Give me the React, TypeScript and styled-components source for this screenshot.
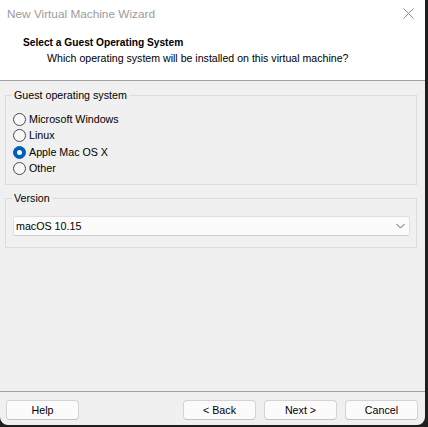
import React, { useState } from "react";
import styled, { createGlobalStyle } from "styled-components";

const Global = createGlobalStyle`
  html, body { margin: 0; padding: 0; background: #1e1e1e; }
  body { font-family: "Liberation Sans", Arial, sans-serif; }
  * { box-sizing: border-box; }
`;

const Window = styled.div`
  width: 425px;
  height: 425px;
  background: #f0f0f0;
  border-radius: 0 0 8px 8px;
  overflow: hidden;
  display: flex;
  flex-direction: column;
  font-family: "Liberation Sans", Arial, sans-serif;
  font-size: 10.7px;
  color: #000;
`;

const Header = styled.div`
  background: #ffffff;
  height: 81px;
  border-bottom: 1px solid #a0a0a0;
  display: flex;
  flex-direction: column;
`;

const TitleBar = styled.div`
  height: 27px;
  display: flex;
  align-items: center;
  justify-content: space-between;
  padding: 0 11px 0 7px;
`;

const TitleText = styled.span`
  font-size: 11.8px;
  color: #9b9b9b;
  font-family: "Liberation Sans", Arial, sans-serif;
`;

const CloseIcon = styled.svg`
  width: 11px;
  height: 11px;
  display: block;
`;

const HeadingBlock = styled.div`
  padding: 9px 0 0 23px;
  display: flex;
  flex-direction: column;
  gap: 3px;
`;

const Heading = styled.div`
  font-weight: bold;
  font-size: 10.2px;
  line-height: 13px;
`;

const Subheading = styled.div`
  font-size: 10.6px;
  line-height: 13px;
  padding-left: 24px;
`;

const Group = styled.fieldset<{ $top: number }>`
  margin: ${(p) => p.$top}px 8px 0 5px;
  padding: 0;
  border: 1px solid #dcdcdc;
  min-width: 0;
`;

const Legend = styled.legend`
  margin-left: 6px;
  padding: 0 2px;
  font-size: 10.7px;
  line-height: 13px;
`;

const RadioList = styled.div`
  display: flex;
  flex-direction: column;
  padding: 9px 0 7px 7px;
`;

const RadioRow = styled.label`
  display: flex;
  align-items: center;
  gap: 3px;
  height: 16.5px;
  line-height: 13px;
  cursor: default;
`;

const RadioCircle = styled.span<{ $checked: boolean }>`
  width: 13px;
  height: 13px;
  border-radius: 50%;
  flex: none;
  display: flex;
  align-items: center;
  justify-content: center;
  background: ${(p) => (p.$checked ? "#005fb8" : "#f7f7f7")};
  border: 1px solid ${(p) => (p.$checked ? "#005fb8" : "#4a4a4a")};
  &::after {
    content: "";
    display: ${(p) => (p.$checked ? "block" : "none")};
    width: 5px;
    height: 5px;
    border-radius: 50%;
    background: #ffffff;
  }
`;

const SelectWrap = styled.div`
  padding: 11px 6px 11px 7px;
`;

const SelectBox = styled.div`
  height: 20px;
  background: #fbfbfb;
  border: 1px solid #e0e0e0;
  border-bottom-color: #cfcfcf;
  border-radius: 2px;
  display: flex;
  align-items: center;
  justify-content: space-between;
  padding: 0 4px 0 2px;
  font-size: 10.7px;
`;

const Chevron = styled.svg`
  width: 9px;
  height: 6px;
  display: block;
`;

const Spacer = styled.div`
  flex: 1;
`;

const Footer = styled.div`
  border-top: 1px solid #a0a0a0;
  padding: 8px 7px 5px 6px;
  display: flex;
  align-items: center;
  gap: 8px;
`;

const Button = styled.button<{ $pushRight?: boolean }>`
  width: 73px;
  height: 20px;
  margin-left: ${(p) => (p.$pushRight ? "auto" : "0")};
  background: #fbfbfb;
  border: 1px solid #d3d3d3;
  border-bottom-color: #c2c2c2;
  border-radius: 4px;
  font-family: "Liberation Sans", Arial, sans-serif;
  font-size: 10.7px;
  color: #000;
  padding: 0;
  line-height: 18px;
`;

const options = ["Microsoft Windows", "Linux", "Apple Mac OS X", "Other"];

export default function App() {
  const [selected, setSelected] = useState("Apple Mac OS X");
  return (
    <>
      <Global />
      <Window>
        <Header>
          <TitleBar>
            <TitleText>New Virtual Machine Wizard</TitleText>
            <CloseIcon viewBox="0 0 11 11">
              <path d="M0.5 0.5 L10.5 10.5 M10.5 0.5 L0.5 10.5" stroke="#8a8a8a" strokeWidth="1" fill="none" />
            </CloseIcon>
          </TitleBar>
          <HeadingBlock>
            <Heading>Select a Guest Operating System</Heading>
            <Subheading>Which operating system will be installed on this virtual machine?</Subheading>
          </HeadingBlock>
        </Header>
        <Group $top={8}>
          <Legend>Guest operating system</Legend>
          <RadioList>
            {options.map((o) => (
              <RadioRow key={o} onClick={() => setSelected(o)}>
                <RadioCircle $checked={selected === o} />
                <span>{o}</span>
              </RadioRow>
            ))}
          </RadioList>
        </Group>
        <Group $top={7}>
          <Legend>Version</Legend>
          <SelectWrap>
            <SelectBox>
              <span>macOS 10.15</span>
              <Chevron viewBox="0 0 9 6">
                <path d="M0.5 1 L4.5 5 L8.5 1" stroke="#606060" strokeWidth="1" fill="none" />
              </Chevron>
            </SelectBox>
          </SelectWrap>
        </Group>
        <Spacer />
        <Footer>
          <Button>Help</Button>
          <Button $pushRight>&lt; Back</Button>
          <Button>Next &gt;</Button>
          <Button>Cancel</Button>
        </Footer>
      </Window>
    </>
  );
}
